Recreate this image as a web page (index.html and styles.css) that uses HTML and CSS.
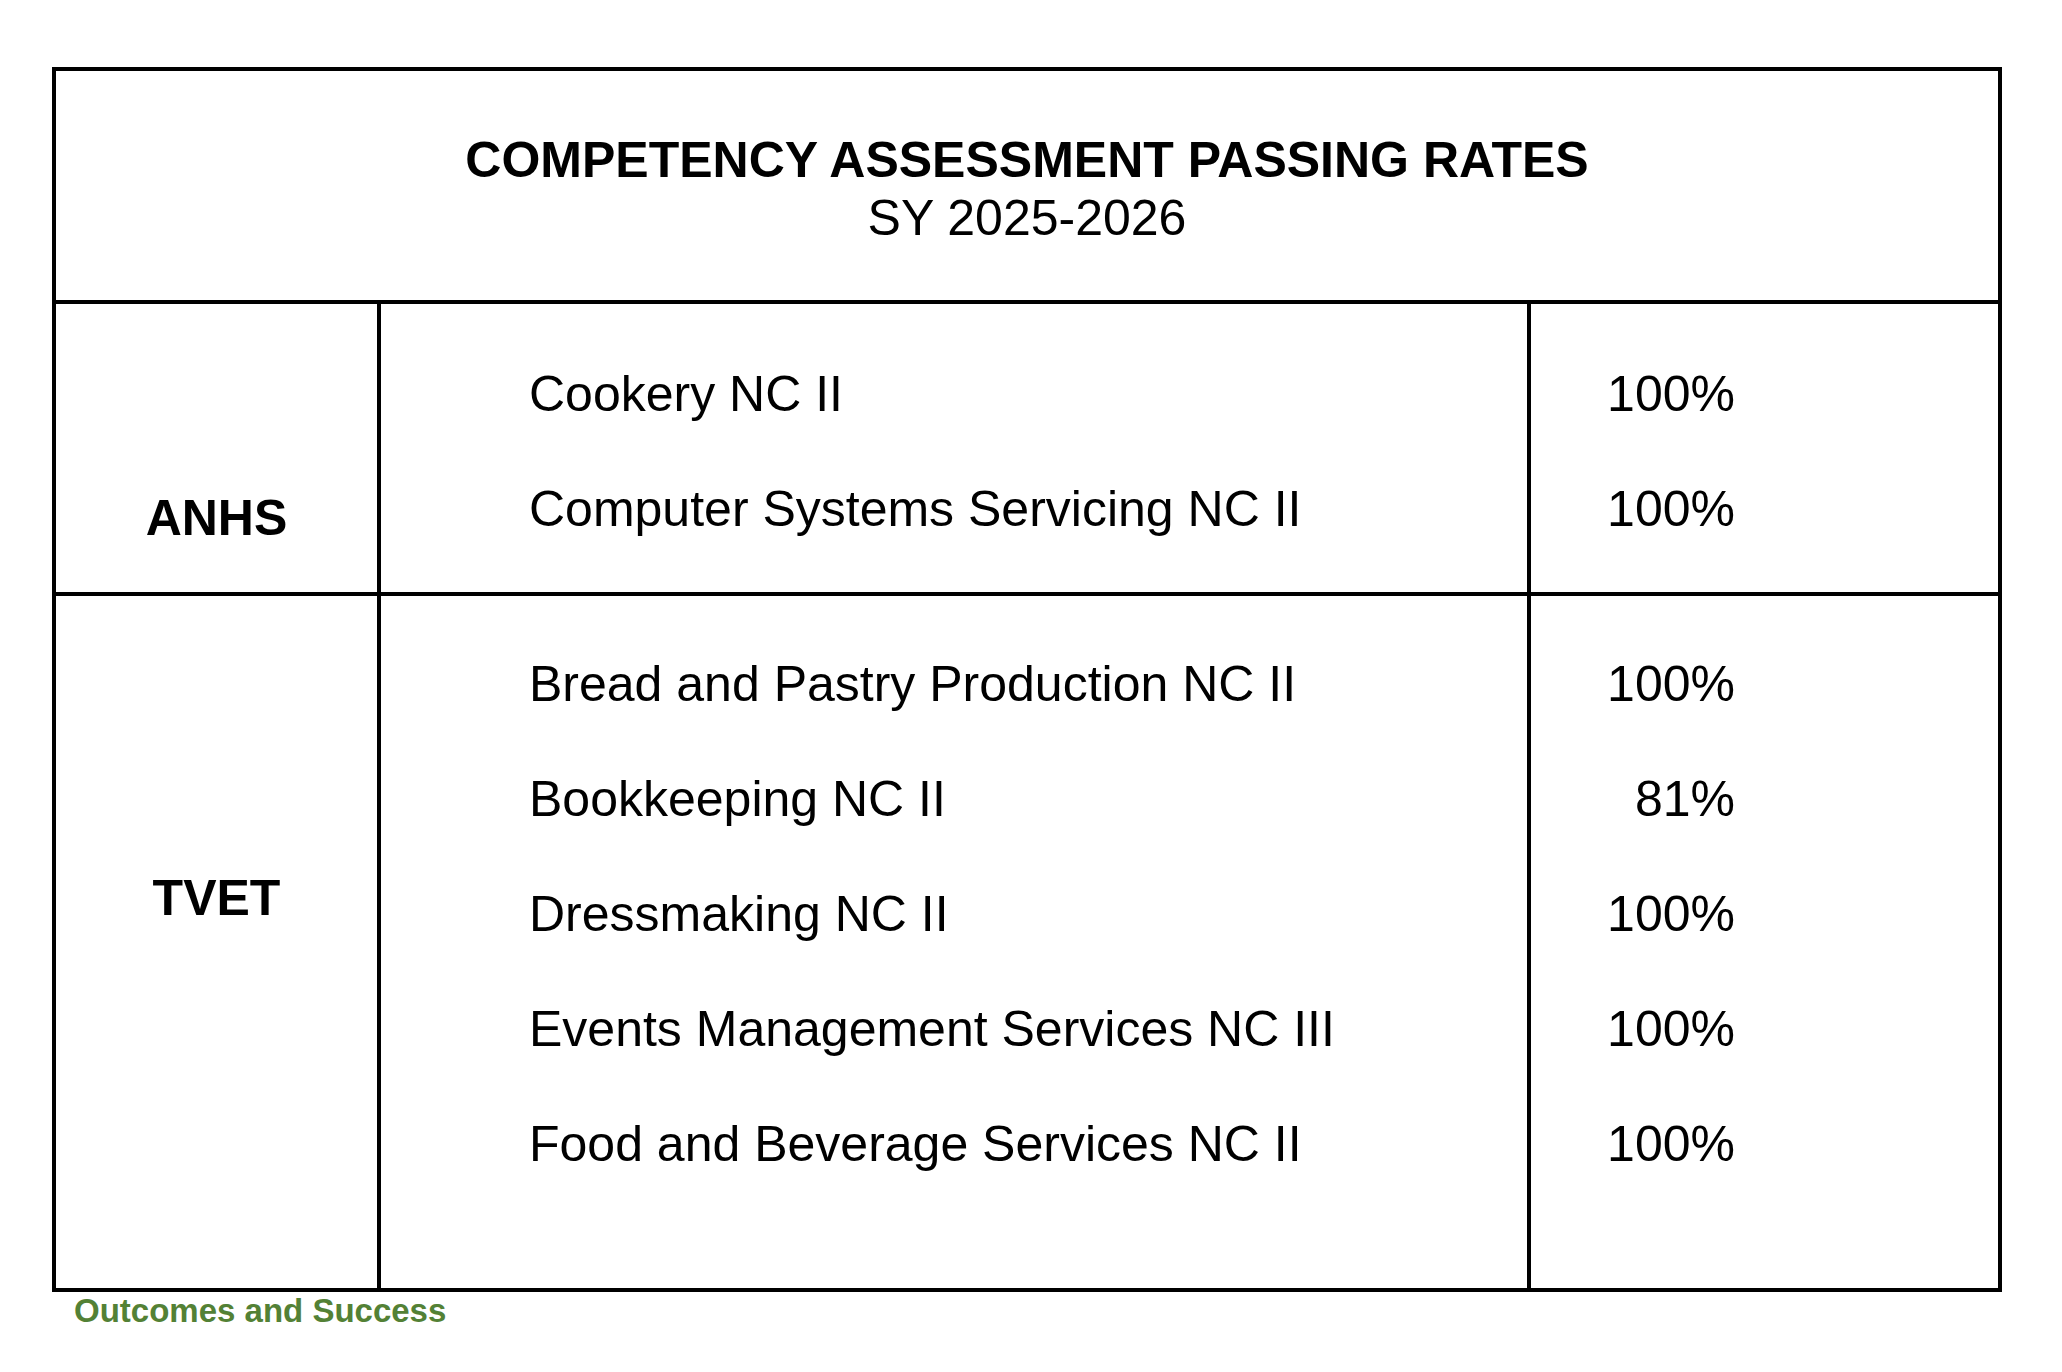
FILE: index.html
```html
<!DOCTYPE html>
<html lang="en">
<head>
<meta charset="utf-8">
<title>Competency Assessment Passing Rates</title>
<link rel="stylesheet" href="styles.css">
</head>
<body>
<main class="slide">
  <section class="table">
    <header class="head">
      <div class="title">COMPETENCY ASSESSMENT PASSING RATES</div>
      <div class="subtitle">SY 2025-2026</div>
    </header>
    <div class="group group-anhs">
      <div class="cat">ANHS</div>
      <div class="quals">
        <div class="line">Cookery NC II</div>
        <div class="line">Computer Systems Servicing NC II</div>
      </div>
      <div class="rates">
        <div class="line">100%</div>
        <div class="line">100%</div>
      </div>
    </div>
    <div class="group group-tvet">
      <div class="cat">TVET</div>
      <div class="quals">
        <div class="line">Bread and Pastry Production NC II</div>
        <div class="line">Bookkeeping NC II</div>
        <div class="line">Dressmaking NC II</div>
        <div class="line">Events Management Services NC III</div>
        <div class="line">Food and Beverage Services NC II</div>
      </div>
      <div class="rates">
        <div class="line">100%</div>
        <div class="line">81%</div>
        <div class="line">100%</div>
        <div class="line">100%</div>
        <div class="line">100%</div>
      </div>
    </div>
  </section>
  <p class="caption">Outcomes and Success</p>
</main>
</body>
</html>
```

FILE: styles.css
```css
html, body {
  margin: 0;
  padding: 0;
  background: #ffffff;
}

body {
  font-family: "Liberation Sans", Arial, sans-serif;
  color: #000000;
}

.slide {
  padding: 67px 0 0 52px;
}

.table {
  box-sizing: border-box;
  width: 1950px;
  border: 4px solid #000000;
}

.head {
  height: 229px;
  box-sizing: content-box;
  padding-top: 0;
  border-bottom: 4px solid #000000;
  text-align: center;
  font-size: 50px;
  line-height: 57.5px;
}

.title {
  padding-top: 61px;
  font-weight: 700;
}

.subtitle {
  font-weight: 400;
}

.group {
  display: grid;
  grid-template-columns: 325px 1150px 1fr;
  font-size: 50px;
  line-height: 115px;
}

.group-anhs {
  height: 288px;
  border-bottom: 4px solid #000000;
}

.group-tvet {
  height: 692px;
}

.cat {
  border-right: 4px solid #000000;
  text-align: center;
  font-weight: 700;
}

.quals {
  border-right: 4px solid #000000;
  padding-left: 148px;
}

.rates {
  text-align: right;
  padding-right: 263px;
}

.group-anhs .cat {
  padding-top: 157px;
}

.group-anhs .quals,
.group-anhs .rates {
  padding-top: 33px;
}

.group-tvet .cat {
  padding-top: 245px;
}

.group-tvet .quals,
.group-tvet .rates {
  padding-top: 31px;
}

.line {
  white-space: nowrap;
}

.caption {
  margin: 0;
  padding-left: 22px;
  font-size: 33px;
  font-weight: 700;
  line-height: normal;
  color: #538135;
}
```
